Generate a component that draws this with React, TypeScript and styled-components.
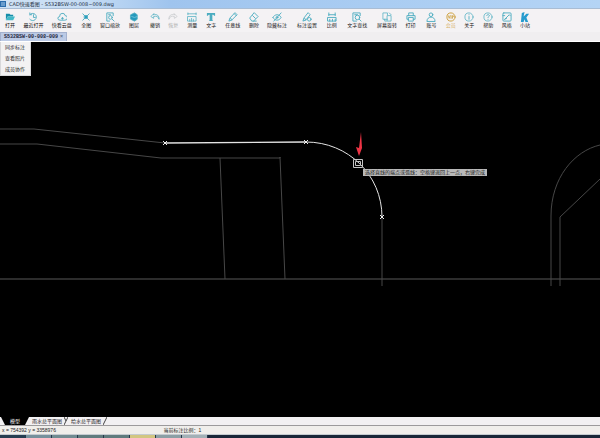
import React from "react";
import styled, { createGlobalStyle, css } from "styled-components";

const Global = createGlobalStyle`
  *, *::before, *::after { box-sizing: border-box; }
  html, body, #root { height: 100%; margin: 0; }
  body { background: #000; overflow: hidden; font-family: "Liberation Sans", "Noto Sans CJK SC", sans-serif; font-size: 5px; color: #222; }
  button { font: inherit; color: inherit; margin: 0; padding: 0; border: 0; background: none; cursor: pointer; }
`;

const Window = styled.div`
  display: flex;
  flex-direction: column;
  height: 100%;
  min-height: 300px;
`;

const TitleBar = styled.header`
  display: flex;
  align-items: center;
  gap: 2px;
  flex: none;
  height: 9px;
  background: linear-gradient(90deg, #d0e2f4 0, #c3dbf4 90px, #9fc4ee 170px, #a6caf1 50%, #b4d4f5 100%);
  border-bottom: 1px solid #a9bdd4;
`;

const AppLogo = styled.svg`
  display: block;
  flex: none;
  width: 7px;
  height: 8px;
`;

const TitleText = styled.h1`
  margin: 0;
  font-family: "DejaVu Sans", "Noto Sans CJK SC", sans-serif;
  font-size: 5px;
  line-height: 8px;
  font-weight: 400;
  color: #1c2c42;
  white-space: nowrap;
`;

const Toolbar = styled.nav`
  display: flex;
  align-items: flex-start;
  flex: none;
  height: 23px;
  padding: 3px 0 0 2px;
  background: #f4f2f4;
`;

const ToolButton = styled.button<{ $width: number; $tone?: "muted" | "gold" }>`
  display: flex;
  flex-direction: column;
  align-items: center;
  flex: 0 0 ${(p) => p.$width / 6}%;
  line-height: 7px;
  white-space: nowrap;
  color: ${(p) => (p.$tone === "muted" ? "#aaa" : p.$tone === "gold" ? "#d8b36c" : "#151515")};
  svg { color: ${(p) => (p.$tone === "muted" ? "#c5c8ca" : p.$tone === "gold" ? "#cb9c35" : "#4bacc0")}; }
`;

const Icon = styled.svg`
  display: block;
  width: 10px;
  height: 10px;
  flex: none;
  fill: none;
  stroke: currentColor;
  stroke-width: 1;
  stroke-linecap: round;
  stroke-linejoin: round;
`;

const FileTabs = styled.div`
  display: flex;
  flex: none;
  height: 10px;
  background: #f0eef0;
  border-bottom: 1px solid #fff;
`;

const FileTab = styled.div`
  display: flex;
  align-items: center;
  gap: 2px;
  padding: 0 3px;
  background: #bccae5;
  border: 1px solid #a4b1ce;
  border-bottom: 0;
  font-family: "Liberation Mono", monospace;
  font-weight: 700;
  color: #1c253c;
  white-space: nowrap;
`;

const CloseButton = styled.button`
  line-height: 6px;
  color: #566580;
`;

const Workspace = styled.main`
  position: relative;
  flex: 1;
  min-height: 0;
  background: #000;
`;

const Drawing = styled.svg`
  display: block;
  width: 100%;
  height: 100%;
  fill: none;
`;

const Menu = styled.div`
  position: absolute;
  top: 0;
  left: 0;
  display: flex;
  flex-direction: column;
  padding-right: 5px;
  background: #f3f2f3;
  border: 1px solid #d8d8da;
  border-top: 0;
`;

const MenuItem = styled.button`
  height: 11px;
  padding-left: 4px;
  text-align: left;
  line-height: 11px;
`;

const Hint = styled.div`
  position: absolute;
  top: 127px;
  left: 363px;
  padding: 0 2px;
  line-height: 7px;
  background: #b9b9b9;
  color: #171717;
  white-space: nowrap;
`;

const SheetBar = styled.div`
  display: flex;
  flex: none;
  height: 9px;
  padding-left: 1px;
  background: #f2f0f2;
  border-bottom: 1px solid #9c9a9c;
`;

const SheetTab = styled.button<{ $active?: boolean }>`
  padding: 0 2px 0 3px;
  line-height: 8px;
  white-space: nowrap;
  ${(p) => p.$active && css`
    padding: 0 9px;
    color: #fff;
    background: #000;
    clip-path: polygon(0 0, 100% 0, calc(100% - 4px) 100%, 4px 100%);
  `}
`;

const Slash = styled.svg`
  width: 4px;
  height: 8px;
  fill: none;
  stroke: #444;
  stroke-width: 1;
`;

const StatusBar = styled.footer`
  display: grid;
  grid-template-columns: 27% 1fr;
  flex: none;
  height: 9px;
  padding-left: 2px;
  line-height: 8px;
  background: #f0eeeb;
  border-bottom: 1px solid #c5cbd0;
`;

const Taskbar = styled.div`
  display: grid;
  grid-template-columns: repeat(8, 26px);
  flex: none;
  height: 3px;
  background: #192638;
`;

const Task = styled.span<{ $shade: string }>`
  background: ${(p) => p.$shade};
  border-right: 1px solid #26374b;
`;

type Tool = { label: string; icon: string; width: number; tone?: "muted" | "gold" };

const tools: Tool[] = [
  { label: "打开", icon: "open", width: 16 },
  { label: "最近打开", icon: "recent", width: 31 },
  { label: "快看云盘", icon: "cloud", width: 26 },
  { label: "全图", icon: "fit", width: 23 },
  { label: "窗口缩放", icon: "zoom", width: 25 },
  { label: "图层", icon: "layers", width: 23 },
  { label: "撤销", icon: "undo", width: 19 },
  { label: "恢复", icon: "redo", width: 18, tone: "muted" },
  { label: "测量", icon: "measure", width: 20 },
  { label: "文字", icon: "text", width: 18 },
  { label: "任意线", icon: "pencil", width: 25 },
  { label: "删除", icon: "erase", width: 18 },
  { label: "隐藏标注", icon: "hide", width: 28 },
  { label: "标注设置", icon: "settings", width: 32 },
  { label: "比例", icon: "scale", width: 18 },
  { label: "文字查找", icon: "find", width: 33 },
  { label: "屏幕旋转", icon: "rotate", width: 27 },
  { label: "打印", icon: "print", width: 20 },
  { label: "账号", icon: "account", width: 22 },
  { label: "会员", icon: "vip", width: 17, tone: "gold" },
  { label: "关于", icon: "about", width: 20 },
  { label: "帮助", icon: "help", width: 18 },
  { label: "风格", icon: "style", width: 19 },
  { label: "小站", icon: "station", width: 18 },
];

const shapes: Record<string, React.ReactNode> = {
  open: <><path fill="#168eaa" stroke="none" d="M1 2h4l1 1h3v2H3L1 9Z" /><path fill="#42b9c8" stroke="none" d="M3 5h8L9 9H1Z" /></>,
  recent: <path d="M2 3a4 4 0 1 1 0 5M2 1v2h2M6 3v3h2" />,
  cloud: <><path d="M3 9a2 2 0 0 1 0-4 3 3 0 0 1 6-1 2.5 2.5 0 0 1 0 5Z" /><path d="M5 7h2M6 6v2" /></>,
  fit: <><path fill="#239bc1" d="M4 4h3v3H4Z" /><path d="m2 2 2 2m5-2L7 4M2 9l2-2m5 2L7 7" /></>,
  zoom: <><path d="M9 4V1H2v9h3" /><circle cx="6" cy="6" r="2" /><path d="m8 8 2 2M4 3h2" /></>,
  layers: <><path fill="#2599bd" d="m2 3 4-2 3 2v5L6 10 2 8Z" /><path stroke="#6fc3d8" d="m3 5 3 1 3-1" /></>,
  undo: <path strokeWidth=".8" d="M4 2 1 5l3 2V5c3-1 5 0 6 3C10 4 8 2 4 3Z" />,
  redo: <path strokeWidth=".8" d="m7 2 3 3-3 2V5C4 4 2 5 1 8c0-4 2-6 6-5Z" />,
  measure: <path strokeWidth=".8" d="M1 2h9M1 1v2m9-2v2M1 5h9v5H1Zm2 3v2m2-3v3m2-2v2" />,
  text: <path fill="currentColor" stroke="none" d="M1 1h9v3H9L8 3H7v6l1 1H3l1-1V3H3L2 4H1Z" />,
  pencil: <path d="m8 1 2 2-6 6-3 1 1-3Zm-1 1 2 2M3 7l1 2" />,
  erase: <path d="m6 1 4 4-5 5H3L1 7Zm-2 3 3 3M5 10h3" />,
  hide: <><path d="M1 6c2-4 7-4 9 0-2 4-7 4-9 0M10 1 2 10" /><circle cx="5.5" cy="6" r="1" /></>,
  settings: <><path d="m7 1 2 2-5 6-3 1 1-3Zm-4 6 1 2" /><circle cx="8" cy="8" r="2" /></>,
  scale: <path d="M2 1v3m7-3v3M2 3h7M1 6h9v4H1Zm2 2v2m3-2v2m3-2v2" />,
  find: <><path d="M9 4V1H1v9h4M3 3h3" /><circle cx="6" cy="6" r="2.5" /><path d="m8 8 2 2" /></>,
  rotate: <path strokeWidth=".8" d="M6 8H1V1h5v2M6 4h4v6H6ZM3 8v2h2M8 1l2 2" />,
  print: <path d="M3 4V1h5v3M3 8H1V4h9v4H8M3 6h5v4H3Z" />,
  account: <><circle cx="5.5" cy="3" r="2" /><path d="M1 10c0-6 9-6 9 0Z" /></>,
  vip: <><circle cx="5.5" cy="5.5" r="4.5" /><path strokeWidth=".8" d="m2.5 4 1 3 1-3m1 0v3m1.5 0V4h1q1.3 1-1 1.8" /></>,
  about: <><circle cx="5.5" cy="5.5" r="4.5" strokeWidth=".8" /><path d="M5.5 5v3m0-5v.1" /></>,
  help: <><circle cx="5.5" cy="5.5" r="4.5" strokeWidth=".8" /><path d="M4 4c1-2 3-1 3 0 0 1-1.5 1-1.5 2m0 2v.1" /></>,
  style: <><rect x="1" y="1" width="9" height="9" rx="1" /><path d="m3 8 5-5 1 1M3 8l2-1M1 4h2" /></>,
  station: <path fill="#269bce" stroke="none" d="m2 1 3-1-1 5 3-3h3L7 6l2 5H6L5 8l-1 3H1Z" />,
};

export default function App() {
  return (
    <Window>
      <Global />
      <TitleBar>
        <AppLogo viewBox="0 0 7 8" aria-hidden="true">
          <path fill="#2b6dac" d="M0 1h6v6H0Z" />
          <path stroke="#a9cdec" strokeWidth="1" d="M1 3h4M1 5h4" />
        </AppLogo>
        <TitleText>CAD快速看图 - S532BSW-00-008~009.dwg</TitleText>
      </TitleBar>
      <Toolbar>
        {tools.map((tool) => (
          <ToolButton key={tool.label} $width={tool.width} $tone={tool.tone}>
            <Icon viewBox="0 0 11 11" aria-hidden="true">{shapes[tool.icon]}</Icon>
            {tool.label}
          </ToolButton>
        ))}
      </Toolbar>
      <FileTabs>
        <FileTab>S532BSW-00-008~009<CloseButton aria-label="关闭">×</CloseButton></FileTab>
      </FileTabs>
      <Workspace>
        <Drawing viewBox="0 42 600 375" preserveAspectRatio="xMinYMin slice" aria-label="道路图纸">
          <path stroke="#2c2c2c" strokeWidth="2" d="M0 279h600" />
          <path stroke="#474747" d="M0 129h34l131 14M0 144h37l124 14h119v-1l5 122M220 158l5 121M382 217v69M551 286v-70c0-38 23-65 49-71M560 286v-69l40-38" />
          <path stroke="#e4e4e4" strokeWidth="1.4" d="m165 143 141-1" />
          <path stroke="#e4e4e4" d="M306 142c42 0 76 33 76 75" />
          <path stroke="#eee" d="m163 141 4 4m0-4-4 4m141-5 4 4m0-4-4 4m76 71 4 4m0-4-4 4" />
          <path stroke="#c4c4c4" d="M353.5 159.5h9v8h-9Zm2 2h5v4h-5Z" />
          <path fill="#ed3445" d="m361 132 1 16-3 8-3-9 3 1Z" />
        </Drawing>
        <Menu>
          <MenuItem>同步标注</MenuItem>
          <MenuItem>查看照片</MenuItem>
          <MenuItem>成员协作</MenuItem>
        </Menu>
        <Hint>选择直线的端点或弧线：空格键退回上一点，右键完成</Hint>
      </Workspace>
      <SheetBar>
        <SheetTab $active>模型</SheetTab>
        <SheetTab>雨水总平面图</SheetTab>
        <Slash viewBox="0 0 4 8" aria-hidden="true"><path d="M4 0 0 8M0 0l2 4" /></Slash>
        <SheetTab>给水总平面图</SheetTab>
        <Slash viewBox="0 0 4 8" aria-hidden="true"><path d="M4 0 0 8" /></Slash>
      </SheetBar>
      <StatusBar>
        <span>x = 754392 y = 3358976</span>
        <span>当前标注比例：1</span>
      </StatusBar>
      <Taskbar aria-hidden="true">
        <Task $shade="#263d50" />
        <Task $shade="#76909c" />
        <Task $shade="#718b91" />
        <Task $shade="#607b7d" />
        <Task $shade="#607b7d" />
        <Task $shade="#d2c681" />
        <Task $shade="#8c9fa5" />
        <Task $shade="#a2b0b6" />
      </Taskbar>
    </Window>
  );
}
